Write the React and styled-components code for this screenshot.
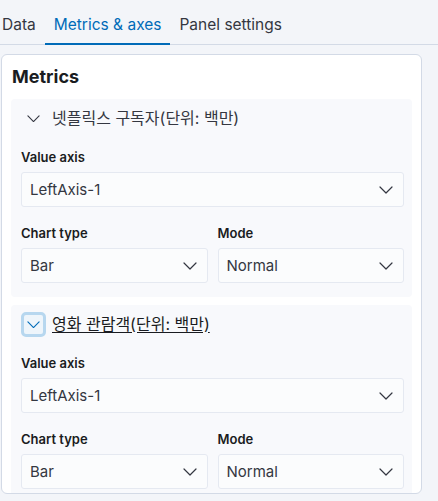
import React from "react";
import styled, { createGlobalStyle } from "styled-components";

const GlobalStyle = createGlobalStyle`
  html, body {
    margin: 0;
    padding: 0;
    background: #f3f5f9;
    font-family: Inter, "Noto Sans CJK KR", sans-serif;
    color: #343741;
  }
  * { box-sizing: border-box; }
`;

const Page = styled.div`
  width: 438px;
  height: 501px;
  overflow: hidden;
`;

const TabBar = styled.div`
  display: flex;
  height: 45px;
  border-bottom: 1px solid #d3dae6;
  margin-left: -7px;
`;

const Tab = styled.div`
  display: flex;
  align-items: center;
  padding: 5px 9px 0;
  font-size: 15.5px;
  color: ${({ $active }) => ($active ? "#006bb8" : "#343741")};
  border-bottom: 2px solid ${({ $active }) => ($active ? "#006bb8" : "transparent")};
  margin-bottom: -1px;
`;

const Card = styled.div`
  margin: 9px 16px 0 1px;
  height: 440px;
  overflow: hidden;
  background: #fff;
  border: 1px solid #d3dae6;
  border-radius: 6px;
  padding: 0 9px;
`;

const CardTitle = styled.h2`
  margin: 0;
  padding: 11px 0 0 1px;
  height: 44px;
  font-size: 18px;
  font-weight: 700;
  color: #1a1c21;
  line-height: 22px;
`;

const Section = styled.div`
  background: #f8f9fc;
  border-radius: 4px;
  padding: 7px 8px 14px 10px;
  & + & {
    margin-top: 8px;
  }
`;

const SectionHeader = styled.div`
  display: flex;
  align-items: center;
  gap: 6px;
  height: 25px;
`;

const Toggle = styled.button`
  display: flex;
  align-items: center;
  justify-content: center;
  width: 25px;
  height: 25px;
  padding: 0;
  border-radius: 5px;
  background: ${({ $focused }) => ($focused ? "#eef5fb" : "transparent")};
  border: ${({ $focused }) => ($focused ? "3px solid #b7d7ef" : "3px solid transparent")};
  color: ${({ $focused }) => ($focused ? "#006bb8" : "#343741")};
`;

const SectionTitle = styled.span`
  font-size: 16px;
  line-height: 20px;
  margin-top: -2px;
  color: ${({ $focused }) => ($focused ? "#1a1c21" : "#343741")};
  text-decoration: ${({ $focused }) => ($focused ? "underline" : "none")};
  text-underline-offset: 2px;
  white-space: nowrap;
`;

const Row = styled.div`
  display: grid;
  grid-template-columns: ${({ $cols }) => `repeat(${$cols}, 1fr)`};
  gap: 10px;
  margin-top: ${({ $first }) => ($first ? "16px" : "16px")};
`;

const Field = styled.div`
  display: flex;
  flex-direction: column;
`;

const Label = styled.label`
  font-size: 13px;
  font-weight: 600;
  line-height: 20px;
  color: #1a1c21;
  margin-bottom: 5px;
`;

const Select = styled.div`
  display: flex;
  align-items: center;
  justify-content: space-between;
  height: 35px;
  padding: 0 10px 0 8px;
  background: #fbfcfd;
  border: 1px solid #e5e9f1;
  border-radius: 3px;
  font-size: 15px;
  color: #343741;
`;

const Chevron = ({ size = 14, color = "currentColor" }) => (
  <svg width={size} height={size / 2 + 1} viewBox="0 0 14 8" fill="none">
    <path d="M1 1l6 6 6-6" stroke={color} strokeWidth="1.2" strokeLinecap="round" strokeLinejoin="round" />
  </svg>
);

const Dropdown = ({ label, value }) => (
  <Field>
    <Label>{label}</Label>
    <Select>
      <span>{value}</span>
      <Chevron />
    </Select>
  </Field>
);

const MetricSection = ({ title, focused }) => (
  <Section>
    <SectionHeader>
      <Toggle $focused={focused}>
        <Chevron size={13} />
      </Toggle>
      <SectionTitle $focused={focused}>{title}</SectionTitle>
    </SectionHeader>
    <Row $cols={1} $first>
      <Dropdown label="Value axis" value="LeftAxis-1" />
    </Row>
    <Row $cols={2}>
      <Dropdown label="Chart type" value="Bar" />
      <Dropdown label="Mode" value="Normal" />
    </Row>
  </Section>
);

export default function App() {
  return (
    <Page>
      <GlobalStyle />
      <TabBar>
        <Tab>Data</Tab>
        <Tab $active>Metrics &amp; axes</Tab>
        <Tab>Panel settings</Tab>
      </TabBar>
      <Card>
        <CardTitle>Metrics</CardTitle>
        <MetricSection title="넷플릭스 구독자(단위: 백만)" />
        <MetricSection title="영화 관람객(단위: 백만)" focused />
      </Card>
    </Page>
  );
}
